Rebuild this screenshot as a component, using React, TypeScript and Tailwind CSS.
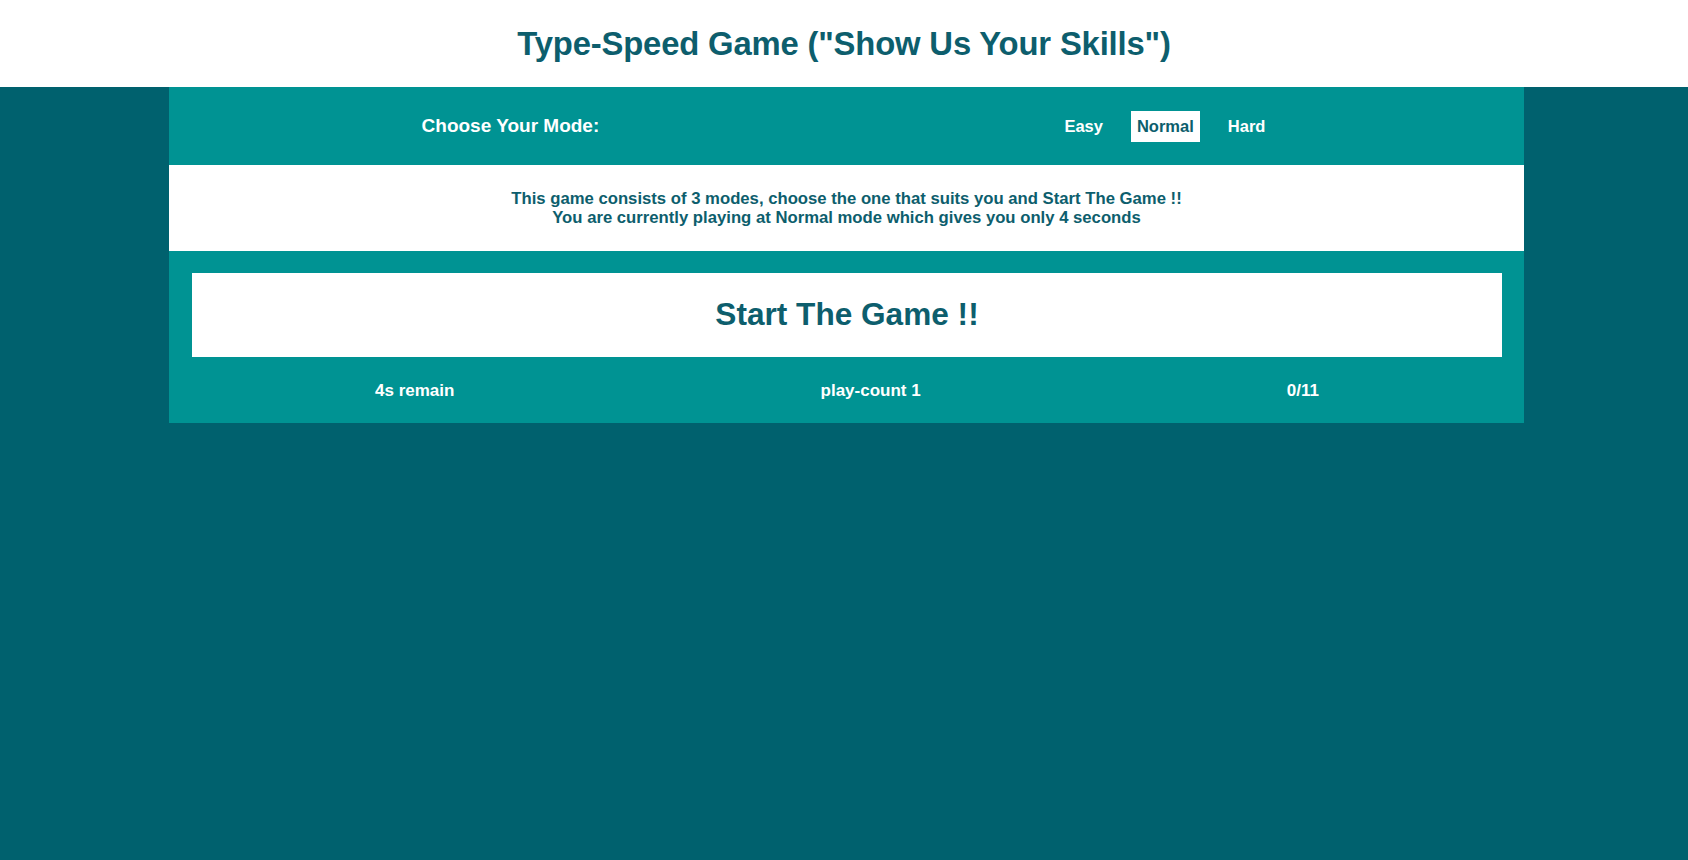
const modes = ['Easy', 'Normal', 'Hard']

const font = "font-['Liberation_Sans','Arial',sans-serif]"

export default function App() {
  return (
    <div className={`min-h-[860px] bg-[#00616e] ${font}`}>
      <header className="h-[87px] bg-white flex items-center justify-center">
        <h1 className="text-[32.8px] font-bold text-[#0d5e6d] tracking-[-0.005em]">Type-Speed Game ("Show Us Your Skills")</h1>
      </header>

      <main className="w-[1355px] ml-[169px]">
        <div className="h-[78px] bg-[#009393] flex items-center justify-around text-white font-bold">
          <span className="text-[19px] pl-[26px]">Choose Your Mode:</span>
          <div className="flex items-center gap-[16px] pr-[20px] text-[16.5px]">
            {modes.map((m) => (
              <button
                key={m}
                className={
                  m === 'Normal'
                    ? 'px-[6px] h-[31px] bg-white text-[#0d5e6d] font-bold'
                    : 'px-[12px] h-[31px] text-white font-bold'
                }
              >
                {m}
              </button>
            ))}
          </div>
        </div>

        <div className="h-[86px] bg-white flex flex-col items-center justify-center text-[#0d5e6d] font-bold text-[16.7px] leading-[19px]">
          <p>This game consists of 3 modes, choose the one that suits you and Start The Game !!</p>
          <p>You are currently playing at Normal mode which gives you only 4 seconds</p>
        </div>

        <div className="bg-[#009393] pl-[23px] pr-[22px] pt-[22px]">
          <div className="h-[84px] bg-white flex items-center justify-center">
            <span className="text-[31.6px] font-bold text-[#0d5e6d]">Start The Game !!</span>
          </div>
          <div className="h-[66px] pt-[2px] flex items-center justify-around text-white font-bold text-[17px]">
            <span>4s remain</span>
            <span>play-count 1</span>
            <span>0/11</span>
          </div>
        </div>
      </main>
    </div>
  )
}
